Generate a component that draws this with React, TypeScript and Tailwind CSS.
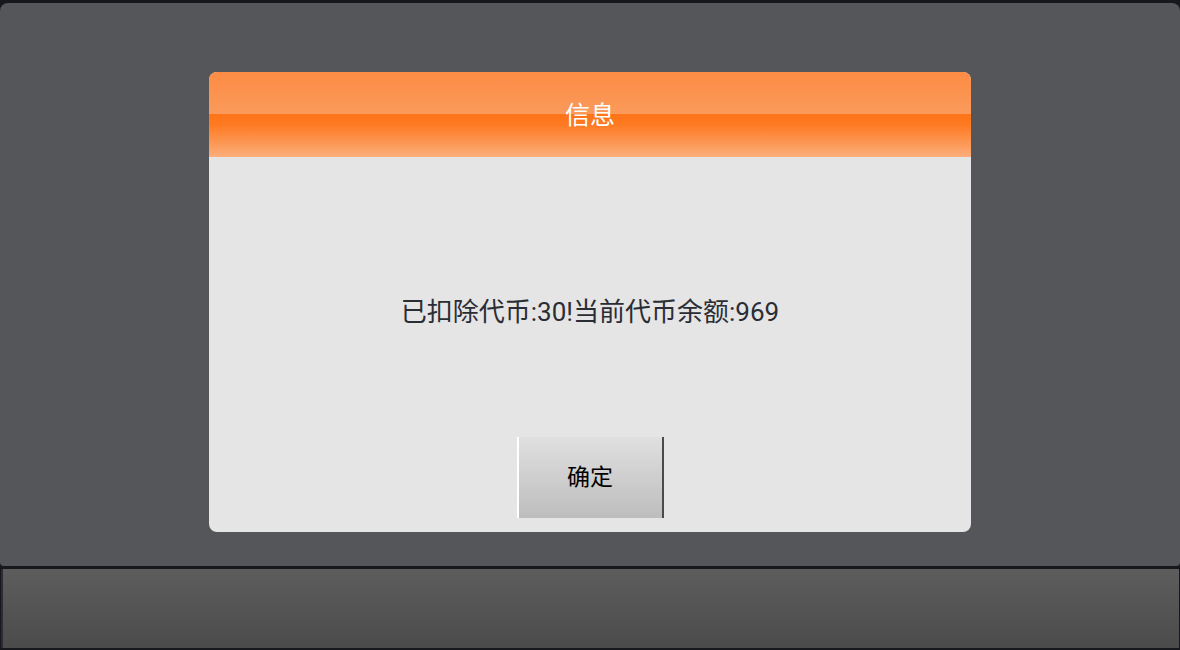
import React from "react";

const font = "font-['Roboto','Noto_Sans_CJK_SC',sans-serif]";

const App: React.FC = () => {
  return (
    <div className={`w-[1180px] h-[650px] bg-[#16181d] flex flex-col ${font}`}>
      {/* main panel */}
      <div className="mt-[3px] h-[563px] rounded-t-lg rounded-b-[4px] bg-[#55565a] flex justify-center pt-[69px]">
        {/* dialog */}
        <div className="w-[762px] h-[460px] rounded-lg overflow-hidden bg-[#e5e5e5] flex flex-col">
          <div className="h-[85px] flex items-center justify-center bg-[linear-gradient(to_bottom,#fd8c44_0%,#fa9a5c_50%,#fe7418_50%,#fe7a22_62%,#fbae7c_100%)]">
            <span className="text-white text-[25px] leading-none pt-[2px]">信息</span>
          </div>
          <div className="flex-1 flex flex-col items-center pt-[138px] pb-[14px]">
            <p className="text-[26px] leading-[34px] text-[#2b2d35]">已扣除代币:30!当前代币余额:969</p>
            <div className="mt-auto w-[147px] h-[81px] flex items-center justify-center border-l-2 border-l-white border-r-2 border-r-[#4a4a4a] bg-[linear-gradient(to_bottom,#e0e0e0,#bdbdbd)]">
              <span className="text-black text-[23px] leading-none">确定</span>
            </div>
          </div>
        </div>
      </div>
      {/* bottom bar */}
      <div className="mt-[3px] h-[79px] mx-[1px] border-l-2 border-[#2c2d30] bg-[linear-gradient(to_bottom,#5d5d5d,#4b4b4b)]" />
    </div>
  );
};

export default App;
